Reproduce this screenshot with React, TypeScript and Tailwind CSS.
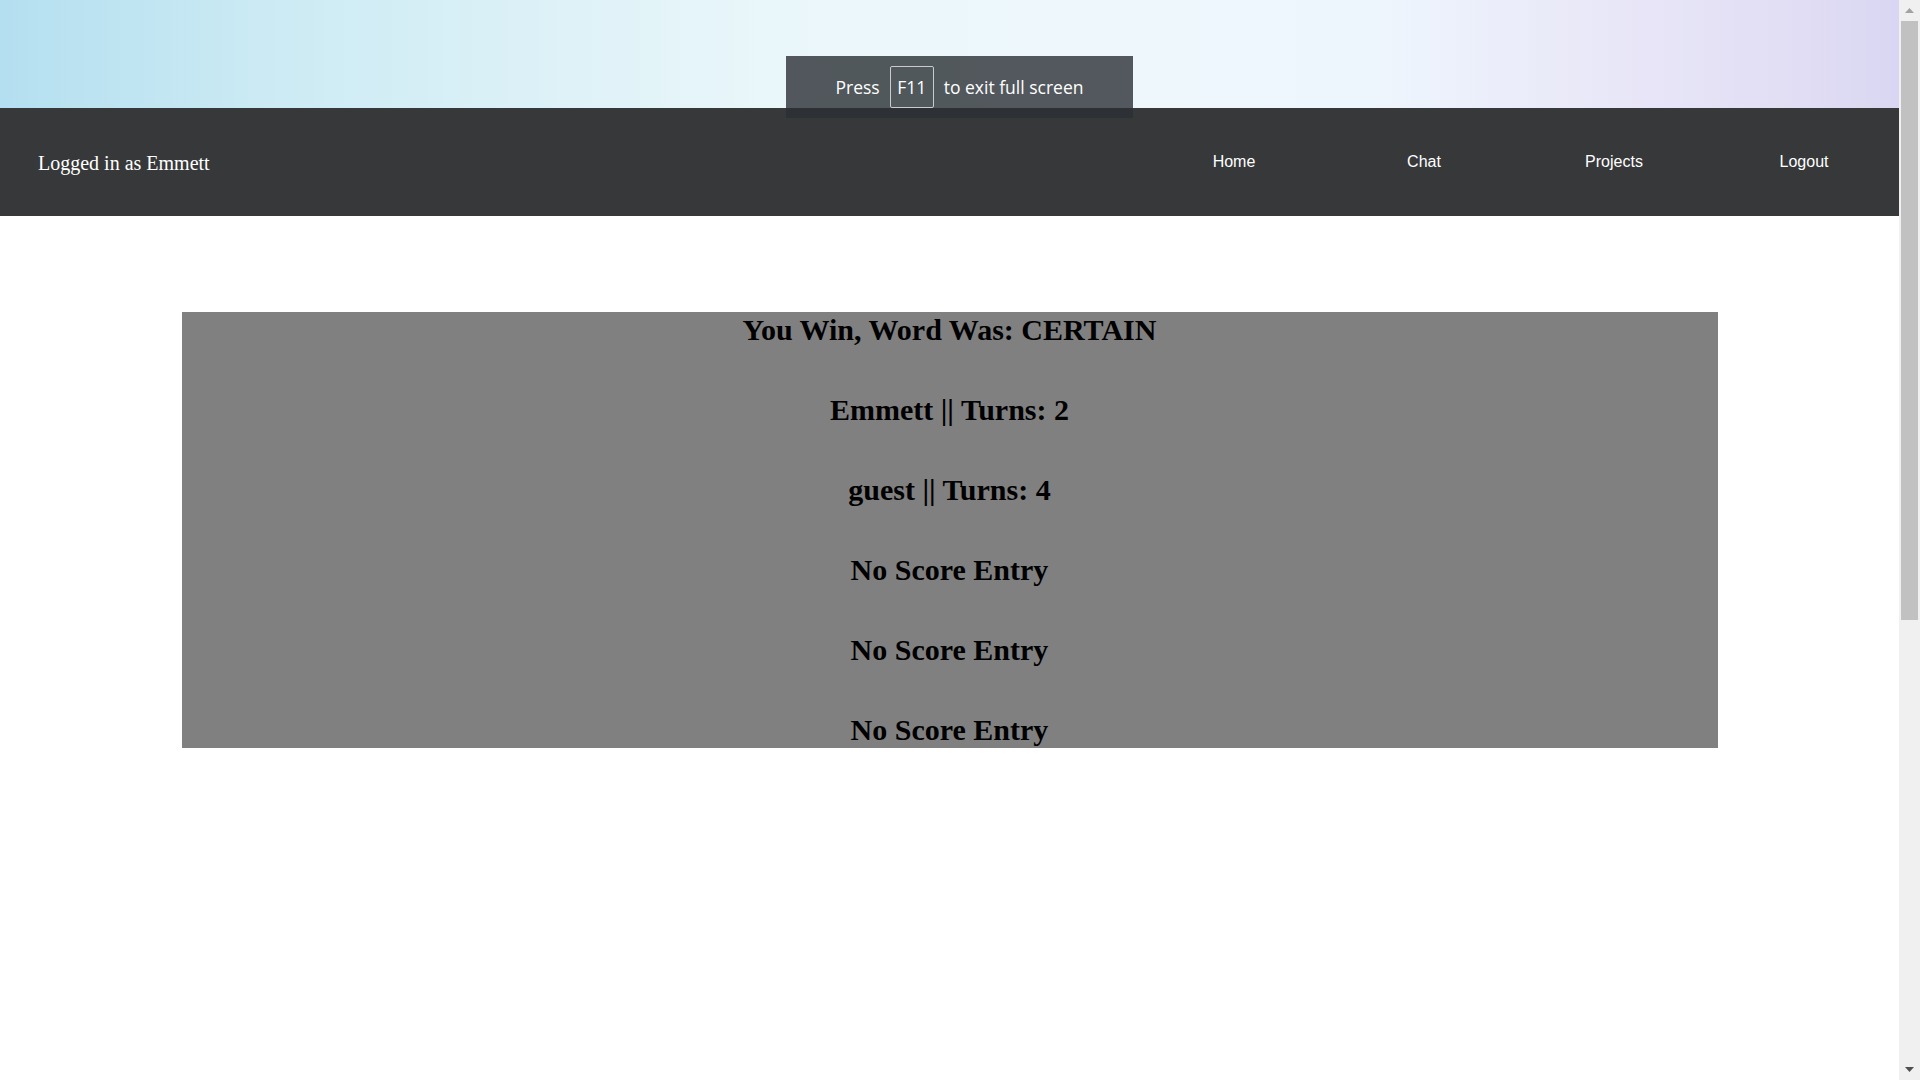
import React from "react";

const navLinks = ["Home", "Chat", "Projects", "Logout"];

const scoreLines = [
  "You Win, Word Was: CERTAIN",
  "Emmett || Turns: 2",
  "guest || Turns: 4",
  "No Score Entry",
  "No Score Entry",
  "No Score Entry",
];

// Fake browser scrollbar on the right edge
const ScrollBar = () => (
  <div className="flex h-full w-[21px] shrink-0 flex-col bg-[#f0f0f0]">
    <div className="flex h-[21px] items-center justify-center">
      <svg width="9" height="5" viewBox="0 0 9 5">
        <polygon points="4.5,0 9,5 0,5" fill="#a3a3a3" />
      </svg>
    </div>
    <div className="mx-[2px] h-[599px] bg-[#c1c1c1]" />
    <div className="flex-1" />
    <div className="flex h-[21px] items-center justify-center">
      <svg width="9" height="5" viewBox="0 0 9 5">
        <polygon points="0,0 9,0 4.5,5" fill="#505050" />
      </svg>
    </div>
  </div>
);

const FullScreenToast = () => (
  <div className="absolute left-[786px] top-[56px] flex h-[62px] w-[347px] items-center justify-center gap-[10px] bg-[rgba(43,47,52,0.8)] font-['Open_Sans',sans-serif] text-[17.5px] text-white">
    <span>Press</span>
    <span className="flex h-[42px] w-[44px] items-center justify-center rounded-[2px] border border-[#c9cbcd]">
      F11
    </span>
    <span>to exit full screen</span>
  </div>
);

export default function App() {
  return (
    <div className="relative flex h-screen w-full overflow-hidden bg-white">
      <div className="flex min-w-0 flex-1 flex-col">
        {/* wallpaper strip */}
        <div className="h-[108px] bg-[linear-gradient(90deg,#b4dff0_0%,#cdebf4_15%,#dcf1f7_28%,#e9f6fa_40%,#eef8fc_55%,#eef6fd_72%,#e9e8f8_84%,#e1ddf4_95%,#d8d6f2_100%)]" />

        {/* navbar */}
        <nav className="flex h-[108px] items-center bg-[#37383a]">
          <span className="pl-[38px] pt-[2px] font-['Liberation_Serif',serif] text-[20px] text-white">
            Logged in as Emmett
          </span>
          <ul className="ml-auto grid w-[760px] grid-cols-4">
            {navLinks.map((link) => (
              <li
                key={link}
                className="text-center font-['Liberation_Sans',Arial,sans-serif] text-[16px] text-white"
              >
                <a href="#">{link}</a>
              </li>
            ))}
          </ul>
        </nav>

        {/* game result */}
        <main className="pt-[96px]">
          <section className="mx-auto flex w-[1536px] flex-col gap-[45.6px] bg-[#808080] pt-[1px] text-center font-['Liberation_Serif',serif] text-[30px] font-bold leading-[34.5px] text-black">
            {scoreLines.map((line, i) => (
              <h2 key={i}>{line}</h2>
            ))}
          </section>
        </main>
      </div>

      <ScrollBar />
      <FullScreenToast />
    </div>
  );
}
